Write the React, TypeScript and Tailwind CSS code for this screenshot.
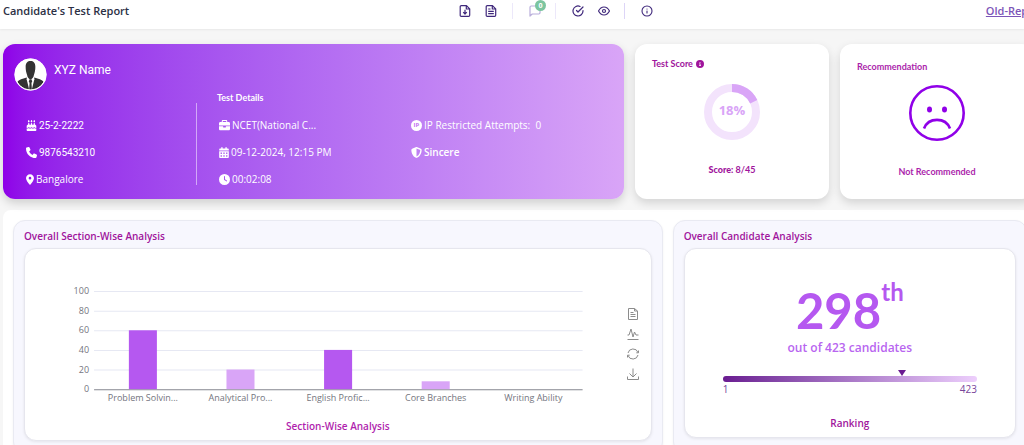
import type { ReactNode } from 'react'
import { FiCheckCircle, FiEye, FiInfo } from 'react-icons/fi'
import {
  FaBriefcase,
  FaCakeCandles,
  FaCalendarDays,
  FaCircleInfo,
  FaClock,
  FaLocationDot,
  FaPhone,
  FaShieldHalved,
} from 'react-icons/fa6'

const sections = [
  { name: 'Problem Solvin...', score: 60 },
  { name: 'Analytical Pro...', score: 20 },
  { name: 'English Profic...', score: 40 },
  { name: 'Core Branches', score: 8 },
  { name: 'Writing Ability', score: 0 },
]

const rank = 298
const total = 423

function IconButton({ label, children }: { label: string; children: ReactNode }) {
  return (
    <button type="button" aria-label={label} className="flex size-4 items-center justify-center">
      {children}
    </button>
  )
}

function Header() {
  return (
    <header className="relative z-10 flex h-[29px] items-center justify-between bg-white pb-[7px] shadow-[0_1px_2px_rgba(0,0,0,0.06)]">
      <h1 className="w-[457px] shrink-0 pl-[3px] text-[11px] font-semibold text-[#2b3044]">Candidate's Test Report</h1>
      <div className="flex flex-1 items-center text-[12px] text-[#40297c]">
        <div className="flex items-center gap-[10px]">
          <IconButton label="Download report">
            <svg viewBox="0 0 12 12" className="size-3 fill-none stroke-current" strokeWidth="1.2" strokeLinejoin="round">
              <path d="M2.300.600H7.500L10.700 3.800V10.300Q10.700 11.400 9.600 11.400H2.300Q1.200 11.400 1.200 10.300V1.700Q1.200.600 2.300.600ZM7.300.600V4H10.700" />
              <path d="M6 4.800V9M4.200 7.200 6 9 7.800 7.200" />
            </svg>
          </IconButton>
          <IconButton label="View report">
            <svg viewBox="0 0 12 12" className="size-3 fill-none stroke-current" strokeWidth="1.2" strokeLinejoin="round">
              <path d="M2.300.600H7.500L10.700 3.800V10.300Q10.700 11.400 9.600 11.400H2.300Q1.200 11.400 1.200 10.300V1.700Q1.200.600 2.300.600ZM7.300.600V4H10.700" />
              <path d="M3.200 4H5.500M3.200 6.300H8.800M3.200 8.700H8.800" />
            </svg>
          </IconButton>
        </div>
        <span className="ml-[13px] h-4 w-px bg-[#ece8fa]" />
        <div className="relative ml-[14px]">
          <IconButton label="Comments">
            <svg viewBox="0 0 12 12" className="size-3 fill-none stroke-[#b9aedb]">
              <path d="M1 11V2.2C1 1.5 1.5 1 2.2 1h7.6c.7 0 1.2.5 1.2 1.2v5.6c0 .7-.5 1.2-1.2 1.2H3.2L1 11Z" strokeWidth="1.2" strokeLinejoin="round" />
            </svg>
          </IconButton>
          <span className="absolute -top-[3px] left-2 flex size-[11px] items-center justify-center rounded-full bg-[#7cc5a0] text-[7px] leading-[9px] font-bold text-white">
            0
          </span>
        </div>
        <span className="ml-3 h-4 w-px bg-[#ece8fa]" />
        <div className="ml-[14px] flex items-center gap-[10px]">
          <IconButton label="Approve">
            <FiCheckCircle strokeWidth={2.4} />
          </IconButton>
          <IconButton label="Preview">
            <FiEye strokeWidth={2.4} />
          </IconButton>
        </div>
        <span className="ml-3 h-4 w-px bg-[#ddd5f7]" />
        <div className="ml-[14px]">
          <IconButton label="Information">
            <FiInfo strokeWidth={2.2} />
          </IconButton>
        </div>
      </div>
      <a href="#old-report" className="-mr-5 shrink-0 text-[11px] font-semibold text-[#7c55b8] underline">
        Old-Report
      </a>
    </header>
  )
}

function Detail({ icon, children }: { icon: ReactNode; children: ReactNode }) {
  return (
    <li className="flex h-[27px] items-center gap-[2px] whitespace-nowrap">
      <span className="flex shrink-0 text-[11px]">{icon}</span>
      {children}
    </li>
  )
}

function IpBadge() {
  return (
    <span className="flex size-[11px] items-center justify-center rounded-full bg-white text-[6px] font-bold text-[#c271f2]">
      IP
    </span>
  )
}

function Avatar() {
  return (
    <svg viewBox="0 0 34 34" className="size-[33px] shrink-0" role="img" aria-label="Candidate">
      <clipPath id="avatar">
        <circle cx="17" cy="17" r="15.5" />
      </clipPath>
      <circle cx="17" cy="17" r="16.5" fill="#fff" />
      <g clipPath="url(#avatar)">
        <path d="M2 31c0-7 1.500-8.500 11-11l4 6 4-6c9.500 2.500 11 4 11 11v4H2Z" fill="#333" />
        <path d="m13.500 19-.5 3L16 34h2l3-12-.5-3Z" fill="#fff" />
        <path d="m16 22-.8 2.500.8 1-.5 8.500h3l-.5-8.500.8-1L18 22Z" fill="#333" />
        <path d="M12 9c0-4 2-6 5-6s5 2 5 6c0 3-.5 6-1.500 8.500C20.300 20 18.500 22 17 22s-3.300-2-3.500-4.500C12.500 15 12 12 12 9Z" fill="#333" />
      </g>
      <circle cx="17" cy="17" r="16" fill="none" stroke="#fff" />
    </svg>
  )
}

function ProfileCard() {
  return (
    <section className="rounded-xl bg-linear-to-r from-[#8f00e8] to-[#d9a5f7] pt-[14px] pb-[6px] text-[10px] text-white shadow-[0_4px_10px_rgba(0,0,0,0.16)]">
      <div className="flex pl-[11px]">
        <Avatar />
        <h2 className="ml-[7px] pt-1 font-[Roboto] text-[12px] leading-4">XYZ Name</h2>
      </div>
      <div className="flex">
        <ul className="w-[193px] shrink-0 pt-[21px] pl-[23px]">
          <Detail icon={<FaCakeCandles />}>
            <span className="font-[Roboto]">25-2-2222</span>
          </Detail>
          <Detail icon={<FaPhone />}>
            <span className="font-[Roboto]">9876543210</span>
          </Detail>
          <Detail icon={<FaLocationDot className="w-2" />}>Bangalore</Detail>
        </ul>
        <span className="mt-3 mb-2 w-px bg-white/50" />
        <div className="flex-1 pl-5">
          <h3 className="mb-[7px] font-[Lato] text-[9px] leading-[14px] font-bold">Test Details</h3>
          <div className="grid grid-cols-[192px_1fr] pl-[2px]">
            <ul>
              <Detail icon={<FaBriefcase />}>NCET(National C...</Detail>
              <Detail icon={<FaCalendarDays className="w-[10px]" />}>09-12-2024, 12:15 PM</Detail>
              <Detail icon={<FaClock />}>00:02:08</Detail>
            </ul>
            <ul>
              <Detail icon={<IpBadge />}>
                <span>IP Restricted Attempts: &nbsp;0</span>
              </Detail>
              <Detail icon={<FaShieldHalved />}>
                <b className="font-semibold">Sincere</b>
              </Detail>
            </ul>
          </div>
        </div>
      </div>
    </section>
  )
}

function ScoreCard() {
  return (
    <section className="flex flex-col rounded-xl bg-white pt-[13px] font-[Lato] text-[9px] leading-[14px] font-bold text-[#a0149c] shadow-[0_4px_10px_rgba(0,0,0,0.14)]">
      <h2 className="flex items-center gap-[3px] pl-[17px]">
        Test Score <FaCircleInfo className="text-[8px]" />
      </h2>
      <div className="relative mx-auto mt-[13px] size-14">
        <svg viewBox="0 0 56 56" className="size-14 -rotate-90 fill-none stroke-8">
          <circle cx="28" cy="28" r="24" className="stroke-[#f3e3fc]" />
          <circle cx="28" cy="28" r="24" pathLength={100} strokeDasharray="18 82" className="stroke-[#d9a5f7]" />
        </svg>
        <span className="absolute inset-0 flex items-center justify-center pb-1 font-['Open_Sans'] text-[13px] text-[#d9a5f7]">
          18%
        </span>
      </div>
      <p className="mt-[23px] text-center">
        <b className="font-black">Score:</b> 8/45
      </p>
    </section>
  )
}

function RecommendationCard() {
  return (
    <section className="flex flex-col rounded-xl bg-white pt-4 font-[Lato] text-[9px] leading-[14px] font-bold text-[#ab1fab] shadow-[0_4px_10px_rgba(0,0,0,0.14)]">
      <h2 className="pl-[17px]">Recommendation</h2>
      <svg viewBox="0 0 56 56" className="mx-auto mt-[11px] size-14 fill-none stroke-[#9000e8]">
        <circle cx="28" cy="28" r="26.700" strokeWidth="2.600" />
        <path d="M15 43.500c4.500-11.500 21.500-11.500 26 0" strokeWidth="2.600" />
        <ellipse cx="20.500" cy="24.500" rx="2.500" ry="3" className="fill-[#9000e8] stroke-none" />
        <ellipse cx="35.500" cy="24.500" rx="2.500" ry="3" className="fill-[#9000e8] stroke-none" />
      </svg>
      <p className="mt-6 text-center">Not Recommended</p>
    </section>
  )
}

function SectionChart() {
  const base = 140
  const left = 69
  const step = 97.5
  return (
    <svg viewBox="0 0 589 160" className="min-w-0 flex-1 fill-[#74757e] font-['Open_Sans'] text-[9px]">
      {[0, 20, 40, 60, 80, 100].map((tick) => (
        <g key={tick}>
          <line
            x1={left}
            x2={557}
            y1={base + 0.5 - tick * 0.98}
            y2={base + 0.5 - tick * 0.98}
            className={tick === 0 ? 'stroke-[#85868f]' : 'stroke-[#e6e8f3]'}
          />
          <text x={left - 5} y={base + 3 - tick * 0.98} textAnchor="end">
            {tick}
          </text>
        </g>
      ))}
      {sections.map(({ name, score }, i) => (
        <g key={name}>
          <rect
            x={left + step * (i + 0.5) - 14}
            y={base - score * 0.98}
            width={28}
            height={score * 0.98}
            className={score >= 40 ? 'fill-[#b558f0]' : 'fill-[#d9a5f7]'}
          />
          <text x={left + step * (i + 0.5)} y={base + 12} textAnchor="middle">
            {name}
          </text>
        </g>
      ))}
    </svg>
  )
}

function ChartTools() {
  return (
    <div className="flex w-9 flex-col items-center gap-1 pt-[57px]">
      <IconButton label="Data view">
        <svg viewBox="0 0 12 12" className="size-3 fill-none stroke-[#8c8c8c]">
          <path d="M1.500.5h6L10.500 3v8.500h-9ZM7.500.500V3H10.500M3.500 4.500h3M3.500 6.500h5M3.500 8.500h5" />
        </svg>
      </IconButton>
      <IconButton label="Line chart">
        <svg viewBox="0 0 12 12" className="size-3 fill-none stroke-[#8c8c8c]">
          <path d="M.5 7h1.500L4 1l2 8 1.500-5L9 7h2.500M.5 11.500h11" />
        </svg>
      </IconButton>
      <IconButton label="Restore">
        <svg viewBox="0 0 12 12" className="size-3 fill-none stroke-[#8c8c8c]">
          <path d="M1 5a5.200 5.200 0 0 1 10-.5M11.500 2.500v2.300H9.300M11 7a5.200 5.200 0 0 1-10 .5M.5 9.500V7.200h2.200" />
        </svg>
      </IconButton>
      <IconButton label="Save image">
        <svg viewBox="0 0 12 12" className="size-3 fill-none stroke-[#8c8c8c]">
          <path d="M6 .5v8M2.500 5.500 6 9l3.500-3.500M.5 8.500v3h11v-3" />
        </svg>
      </IconButton>
    </div>
  )
}

function Panel({ title, children }: { title: string; children: ReactNode }) {
  return (
    <section className="rounded-xl border border-[#e9eaf2] bg-[#f7f7fe] px-[10px] pt-2 pb-3 shadow-[0_1px_3px_rgba(0,0,0,0.05)]">
      <h2 className="mb-[5px] text-[10px] leading-[14px] font-semibold text-[#a0149c]">{title}</h2>
      {children}
    </section>
  )
}

function Ranking() {
  return (
    <div className="flex h-[190px] flex-col rounded-xl border border-[#e6e6ee] bg-white px-[38px] text-center shadow-[0_1px_3px_rgba(0,0,0,0.08)]">
      <p className="mt-[31px] flex justify-center font-[Lato] font-bold text-[#b558f0]">
        <span className="pt-2 text-[49px] leading-[44px]">{rank}</span>
        <span className="text-[24px] leading-6">th</span>
      </p>
      <p className="mt-2 text-[12px] leading-4 font-semibold text-[#b865f0]">out of {total} candidates</p>
      <div className="relative mt-5 h-[6px] rounded-full bg-linear-to-r from-[#6a1b91] to-[#edcffc]">
        <span
          className="absolute -top-[6px] -translate-x-1/2 border-x-4 border-t-[6px] border-x-transparent border-t-[#6a1b91]"
          style={{ left: `${((rank - 1) / (total - 1)) * 100}%` }}
        />
      </div>
      <div className="flex justify-between text-[10px] leading-[14px] text-[#77459a]">
        <span>1</span>
        <span>{total}</span>
      </div>
      <h3 className="mt-5 text-[10px] leading-[14px] font-semibold text-[#a0149c]">Ranking</h3>
    </div>
  )
}

export default function App() {
  return (
    <div className="min-h-screen overflow-hidden bg-[#f6f6f6] font-['Open_Sans',sans-serif]">
      <Header />
      <main className="pl-[3px]">
        <div className="-mr-[10px] grid grid-cols-[16fr_5fr_5fr] gap-[11px] pt-[15px]">
          <ProfileCard />
          <ScoreCard />
          <RecommendationCard />
        </div>
        <div className="mt-[11px] -mr-[13px] grid grid-cols-[11fr_6fr] gap-[10px] rounded-lg bg-white p-[10px]">
          <Panel title="Overall Section-Wise Analysis">
            <div className="rounded-xl border border-[#e6e6ee] bg-white pb-[7px] shadow-[0_1px_3px_rgba(0,0,0,0.08)]">
              <div className="flex items-start">
                <SectionChart />
                <ChartTools />
              </div>
              <h3 className="mt-[10px] text-center text-[10px] leading-[14px] font-semibold text-[#b01fae]">
                Section-Wise Analysis
              </h3>
            </div>
          </Panel>
          <Panel title="Overall Candidate Analysis">
            <Ranking />
          </Panel>
        </div>
      </main>
    </div>
  )
}
